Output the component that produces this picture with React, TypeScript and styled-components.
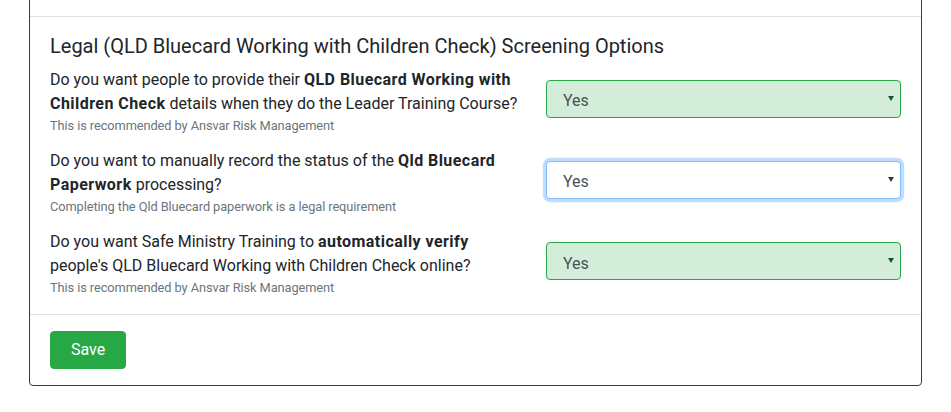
import React from "react";
import styled, { createGlobalStyle } from "styled-components";

const FONT = `"Segoe UI", Roboto, "Liberation Sans", sans-serif`;

const GlobalStyle = createGlobalStyle`
  html, body { margin: 0; padding: 0; background: #ffffff; }
  body {
    font-family: ${FONT};
    font-size: 16px;
    line-height: 1.5;
    color: #212529;
    overflow: hidden;
  }
  * { box-sizing: border-box; }
`;

const Page = styled.div`
  width: 951px;
  height: 412px;
  padding-left: 29px;
  overflow: hidden;
`;

const Card = styled.div`
  width: 893px;
  margin-top: -24px;
  border: 1px solid #343a40;
  border-radius: 4px;
  background: #fff;
`;

const TopSection = styled.div`
  height: 40px;
  border-bottom: 1px solid #e0e0e0;
`;

const Body = styled.div`
  padding: 15px 20px 19px;
  border-bottom: 1px solid #e0e0e0;
`;

const Title = styled.h5`
  margin: 0 0 7px;
  padding-top: 2px;
  font-size: 20px;
  font-weight: 400;
  line-height: 1.2;
  color: #212529;
`;

const Rows = styled.div`
  display: flex;
  flex-direction: column;
  gap: 14px;
`;

const Row = styled.div`
  display: grid;
  grid-template-columns: 470px 355px;
  justify-content: space-between;
  align-items: center;
`;

const Label = styled.div`
  padding-top: 3px;
  margin-bottom: -3px;
`;

const Question = styled.label`
  display: block;
  font-size: 16px;
  line-height: 24px;

  b {
    font-weight: 700;
    letter-spacing: 0.45px;
  }
`;

const Hint = styled.small`
  display: block;
  font-size: 12.8px;
  line-height: 19.2px;
  letter-spacing: -0.08px;
  color: #6c757d;
`;

const SelectWrap = styled.div<{ $state: "valid" | "focus" }>`
  position: relative;
  &::after {
    content: "";
    position: absolute;
    right: 7px;
    top: 50%;
    margin-top: -3px;
    border-left: 3px solid transparent;
    border-right: 3px solid transparent;
    border-top: 5px solid ${(p) => (p.$state === "valid" ? "#155724" : "#343a40")};
    pointer-events: none;
  }
`;

const Select = styled.select<{ $state: "valid" | "focus" }>`
  appearance: none;
  -webkit-appearance: none;
  display: block;
  width: 100%;
  height: 38px;
  padding: 4px 28px 0 16px;
  font-family: ${FONT};
  font-size: 16px;
  color: #495057;
  border-radius: 4px;
  outline: none;
  background: ${(p) => (p.$state === "valid" ? "#d4edda" : "#ffffff")};
  border: 1px solid ${(p) => (p.$state === "valid" ? "#28a745" : "#80bdff")};
  box-shadow: ${(p) => (p.$state === "focus" ? "0 0 0 3.2px rgba(0,123,255,.25)" : "none")};
`;

const Footer = styled.div`
  padding: 16px 20px;
`;

const SaveButton = styled.button`
  display: block;
  width: 76px;
  height: 38px;
  border: 1px solid #28a745;
  border-radius: 4px;
  background: #28a745;
  color: #fff;
  font-family: ${FONT};
  font-size: 16px;
  line-height: 1.5;
  padding: 0;
  cursor: pointer;
`;

type Item = {
  question: React.ReactNode;
  hint: string;
  state: "valid" | "focus";
};

const items: Item[] = [
  {
    question: (
      <>
        Do you want people to provide their <b>QLD Bluecard Working with Children Check</b> details when they do
        the Leader Training Course?
      </>
    ),
    hint: "This is recommended by Ansvar Risk Management",
    state: "valid",
  },
  {
    question: (
      <>
        Do you want to manually record the status of the <b>Qld Bluecard Paperwork</b> processing?
      </>
    ),
    hint: "Completing the Qld Bluecard paperwork is a legal requirement",
    state: "focus",
  },
  {
    question: (
      <>
        Do you want Safe Ministry Training to <b>automatically verify</b> people's QLD Bluecard Working with
        Children Check online?
      </>
    ),
    hint: "This is recommended by Ansvar Risk Management",
    state: "valid",
  },
];

export default function App() {
  return (
    <Page>
      <GlobalStyle />
      <Card>
        <TopSection />
        <Body>
          <Title>Legal (QLD Bluecard Working with Children Check) Screening Options</Title>
          <Rows>
            {items.map((it, i) => (
              <Row key={i}>
                <Label>
                  <Question>{it.question}</Question>
                  <Hint>{it.hint}</Hint>
                </Label>
                <SelectWrap $state={it.state}>
                  <Select $state={it.state} defaultValue="Yes">
                    <option>Yes</option>
                    <option>No</option>
                  </Select>
                </SelectWrap>
              </Row>
            ))}
          </Rows>
        </Body>
        <Footer>
          <SaveButton>Save</SaveButton>
        </Footer>
      </Card>
    </Page>
  );
}
